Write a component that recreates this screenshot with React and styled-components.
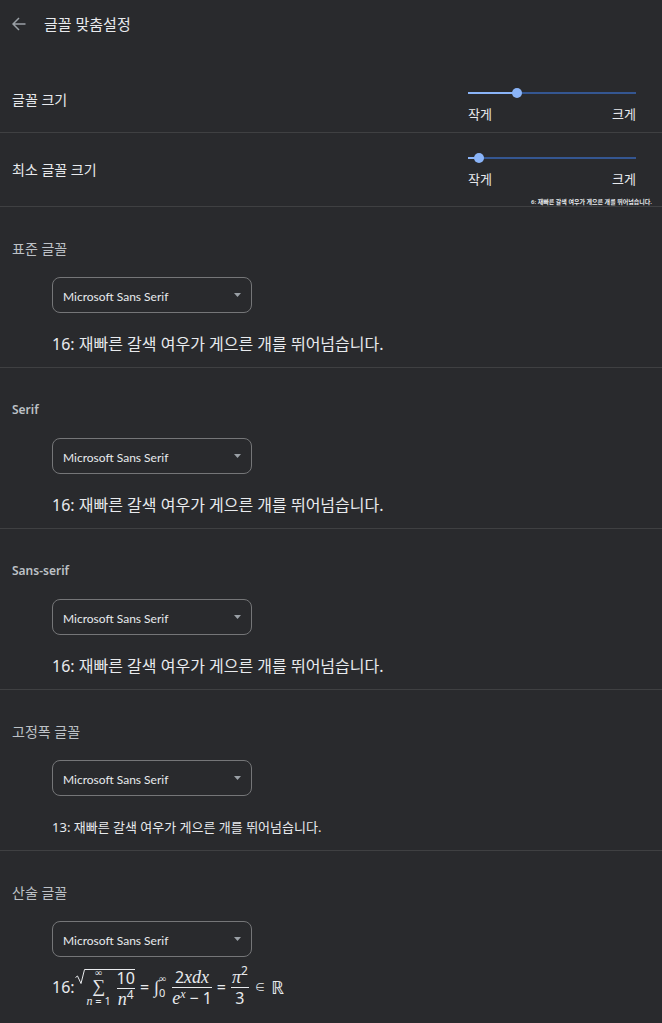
import React, { useState } from 'react';
import styled, { createGlobalStyle } from 'styled-components';

const SAMPLE = '재빠른 갈색 여우가 게으른 개를 뛰어넘습니다.';

const fontSections = [
  { id: 'standard', label: '표준 글꼴', size: 16 },
  { id: 'serif', label: 'Serif', size: 16, latin: true },
  { id: 'sans', label: 'Sans-serif', size: 16, latin: true },
  { id: 'fixed', label: '고정폭 글꼴', size: 13 },
  { id: 'math', label: '산술 글꼴', size: 16, math: true },
];

const fontNames = ['Microsoft Sans Serif', 'Malgun Gothic', 'Arial'];

const SizeRow = ({ id, label, max, initial, preview }) => {
  const [value, setValue] = useState(initial);

  return (
    <Row $tall={!preview}>
      <RowLabel htmlFor={id}>{label}</RowLabel>
      <SliderBox $tall={!preview}>
        <Slider
          id={id}
          type="range"
          min="0"
          max={max}
          value={value}
          onChange={(e) => setValue(Number(e.target.value))}
          style={{ '--fill': `${(value / max) * 100}%` }}
        />
        <Legend>
          <span>작게</span>
          <span>크게</span>
        </Legend>
      </SliderBox>
      {preview && <TinyPreview>6: {SAMPLE}</TinyPreview>}
    </Row>
  );
};

const Formula = () => (
  <MathLine>
    <span>16:</span>
    <RootSign viewBox="0 0 10 42">
      <path d="M0.5 11.5L2.5 10L6 17.5L9.5 3.5H10" />
    </RootSign>
    <Radicand>
      <SumStack>
        <Infinity>∞</Infinity>
        <Sigma>∑</Sigma>
        <Small>
          <Var $size={12}>n</Var> = 1
        </Small>
      </SumStack>
      <Fraction>
        <Part>10</Part>
        <Part $under>
          <Var>n</Var>
          <Power $low>4</Power>
        </Part>
      </Fraction>
    </Radicand>
    <Operator>=</Operator>
    <Integral>∫</Integral>
    <Limits>
      <Infinity>∞</Infinity>
      <Small>0</Small>
    </Limits>
    <Fraction>
      <Part>
        2<Var>xdx</Var>
      </Part>
      <Part $under>
        <Var>e</Var>
        <Power $low>
          <Var $size={12}>x</Var>
        </Power>
        <Minus>−</Minus>1
      </Part>
    </Fraction>
    <Operator>=</Operator>
    <Fraction>
      <Part>
        <Var>π</Var>
        <Power>2</Power>
      </Part>
      <Part $under>3</Part>
    </Fraction>
    <Element>∈</Element>
    <Reals>ℝ</Reals>
  </MathLine>
);

const FontSection = ({ section }) => {
  const [font, setFont] = useState(fontNames[0]);

  return (
    <Section>
      <SectionLabel htmlFor={section.id} $latin={section.latin}>
        {section.label}
      </SectionLabel>
      <SelectWrap>
        <Select id={section.id} value={font} onChange={(e) => setFont(e.target.value)}>
          {fontNames.map((name) => (
            <option key={name}>{name}</option>
          ))}
        </Select>
        <Caret viewBox="0 0 7 4">
          <path d="M0 0h7L3.5 4z" />
        </Caret>
      </SelectWrap>
      {section.math ? (
        <Formula />
      ) : (
        <Sample $size={section.size}>
          {section.size}: {SAMPLE}
        </Sample>
      )}
    </Section>
  );
};

const App = () => (
  <>
    <GlobalStyle />
    <Page>
      <Header>
        <BackButton aria-label="뒤로">
          <svg width="14" height="14" viewBox="0 0 14 14">
            <path d="M13.5 7H1.5M7 1L1 7l6 6" />
          </svg>
        </BackButton>
        <Title>글꼴 맞춤설정</Title>
      </Header>
      <SizeRow id="font-size" label="글꼴 크기" max={24} initial={7} />
      <SizeRow id="min-font-size" label="최소 글꼴 크기" max={15} initial={1} preview />
      {fontSections.map((section) => (
        <FontSection key={section.id} section={section} />
      ))}
    </Page>
  </>
);

const GlobalStyle = createGlobalStyle`
  * {
    box-sizing: border-box;
  }

  body {
    margin: 0;
    background: #292a2d;
    color: #e8eaed;
    font-family: 'Noto Sans', 'Noto Sans CJK KR', sans-serif;
  }
`;

const Page = styled.main`
  min-height: 100vh;
`;

const Header = styled.header`
  display: flex;
  align-items: center;
  height: 48px;
  padding-left: 9px;
`;

const BackButton = styled.button`
  display: flex;
  align-items: center;
  justify-content: center;
  width: 20px;
  height: 20px;
  padding: 0;
  border: none;
  background: none;

  svg {
    fill: none;
    stroke: #9aa0a6;
    stroke-width: 1.5;
  }
`;

const Title = styled.h1`
  margin: 0 0 0 15px;
  font-size: 15px;
  font-weight: 400;
  line-height: 22px;
`;

const Row = styled.div`
  position: relative;
  display: flex;
  justify-content: space-between;
  align-items: center;
  height: ${({ $tall }) => ($tall ? '85px' : '74px')};
  padding: ${({ $tall }) => ($tall ? '20px 26px 0 12px' : '0 26px 0 12px')};
  border-bottom: 1px solid #3f4042;
`;

const RowLabel = styled.label`
  font-size: 14px;
  line-height: 20px;
`;

const SliderBox = styled.div`
  width: 168px;
  padding-top: ${({ $tall }) => ($tall ? '12px' : '2px')};
`;

/* wider than its box by half a thumb on each side, so the thumb reaches both ends of the track */
const Slider = styled.input`
  display: block;
  appearance: none;
  width: calc(100% + 10px);
  height: 10px;
  margin: 0 -5px 6px;
  background: linear-gradient(to right, #8ab4f8 var(--fill), #345691 var(--fill)) center / calc(100% - 10px) 2px no-repeat;

  &::-webkit-slider-thumb {
    appearance: none;
    width: 10px;
    height: 10px;
    border-radius: 50%;
    background: #8ab4f8;
  }
`;

const Legend = styled.div`
  display: flex;
  justify-content: space-between;
  font-size: 13px;
  line-height: 20px;
`;

const TinyPreview = styled.div`
  position: absolute;
  right: 10px;
  bottom: 0;
  font-size: 6px;
  font-weight: 600;
  line-height: 8px;
`;

const Section = styled.section`
  padding: 32px 12px 10px;

  & + & {
    border-top: 1px solid #3f4042;
  }
`;

const SectionLabel = styled.label`
  display: block;
  font-size: ${({ $latin }) => ($latin ? '12px' : '14px')};
  font-weight: ${({ $latin }) => ($latin ? 600 : 400)};
  line-height: 20px;
  color: #bdc1c6;
`;

const SelectWrap = styled.div`
  position: relative;
  width: 200px;
  margin: 18px 0 0 40px;
`;

const Select = styled.select`
  display: block;
  appearance: none;
  width: 100%;
  height: 36px;
  padding: 2px 28px 0 10px;
  border: 1px solid #757678;
  border-radius: 8px;
  background: #292a2d;
  color: #e8eaed;
  font-family: Lato, sans-serif;
  font-size: 12px;
`;

const Caret = styled.svg`
  position: absolute;
  top: 16px;
  right: 11px;
  width: 7px;
  height: 4px;
  fill: #9aa0a6;
  pointer-events: none;
`;

const Sample = styled.div`
  margin: 19px 0 0 40px;
  font-size: ${({ $size }) => $size}px;
  line-height: 25px;
`;

const MathLine = styled.div`
  display: flex;
  align-items: center;
  height: 42px;
  margin: 9px 0 0 40px;
  font-size: 16px;
  line-height: 20px;
`;

const RootSign = styled.svg`
  width: 10px;
  height: 42px;
  fill: none;
  stroke: #e8eaed;
`;

const Radicand = styled.div`
  display: flex;
  align-items: center;
  gap: 4px;
  height: 36px;
  border-top: 1px solid #e8eaed;
`;

const SumStack = styled.div`
  display: flex;
  flex-direction: column;
  align-items: center;
  width: 28px;
`;

const Small = styled.span`
  font-size: 11px;
  line-height: 12px;
  white-space: nowrap;
`;

const Infinity = styled.span`
  font-family: 'Liberation Serif', serif;
  font-size: 10px;
  line-height: 8px;
`;

const Sigma = styled.span`
  font-family: 'Liberation Serif', serif;
  font-size: 18px;
  line-height: 18px;
`;

const Fraction = styled.div`
  display: flex;
  flex-direction: column;
  min-width: 18px;
`;

const Part = styled.div`
  display: flex;
  justify-content: center;
  align-items: baseline;
  height: 20px;
  border-top: ${({ $under }) => ($under ? '1px solid #e8eaed' : 'none')};
`;

const Var = styled.i`
  font-family: 'Liberation Serif', serif;
  font-size: ${({ $size = 18 }) => $size}px;
`;

const Power = styled.sup`
  align-self: flex-start;
  font-size: 12px;
  line-height: ${({ $low }) => ($low ? '12px' : '8px')};
`;

const Operator = styled.span`
  padding: 0 5px;
`;

const Minus = styled.span`
  padding: 0 4px;
`;

const Integral = styled.span`
  font-family: 'Liberation Serif', serif;
  font-size: 18px;
`;

const Limits = styled.div`
  display: flex;
  flex-direction: column;
  gap: 4px;
  margin-right: 6px;
`;

const Element = styled.span`
  padding: 0 6px;
  font-size: 10px;
`;

const Reals = styled.span`
  font-size: 18px;
`;

export default App;
